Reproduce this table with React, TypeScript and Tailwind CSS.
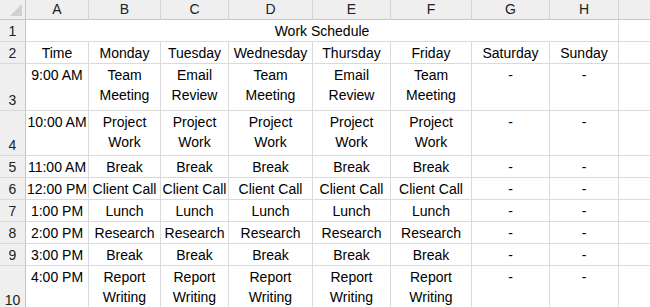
const cols = ["A", "B", "C", "D", "E", "F", "G", "H", ""];

const rows: { n: number; cells: string[]; tall?: boolean }[] = [
  { n: 2, cells: ["Time", "Monday", "Tuesday", "Wednesday", "Thursday", "Friday", "Saturday", "Sunday"] },
  { n: 3, cells: ["9:00 AM", "Team Meeting", "Email Review", "Team Meeting", "Email Review", "Team Meeting", "-", "-"], tall: true },
  { n: 4, cells: ["10:00 AM", "Project Work", "Project Work", "Project Work", "Project Work", "Project Work", "-", "-"], tall: true },
  { n: 5, cells: ["11:00 AM", "Break", "Break", "Break", "Break", "Break", "-", "-"] },
  { n: 6, cells: ["12:00 PM", "Client Call", "Client Call", "Client Call", "Client Call", "Client Call", "-", "-"] },
  { n: 7, cells: ["1:00 PM", "Lunch", "Lunch", "Lunch", "Lunch", "Lunch", "-", "-"] },
  { n: 8, cells: ["2:00 PM", "Research", "Research", "Research", "Research", "Research", "-", "-"] },
  { n: 9, cells: ["3:00 PM", "Break", "Break", "Break", "Break", "Break", "-", "-"] },
  { n: 10, cells: ["4:00 PM", "Report Writing", "Report Writing", "Report Writing", "Report Writing", "Report Writing", "-", "-"], tall: true },
];

function RowHead({ n }: { n: number }) {
  return (
    <div className="flex items-end justify-center bg-[#efefef] border-r border-b border-r-[#c6c6c6] border-b-[#d9d9d9] text-[#222] leading-[20px]">
      {n}
    </div>
  );
}

function Cell({ text, last, wrap }: { text: string; last?: boolean; wrap?: boolean }) {
  return (
    <div
      className={
        "flex justify-center text-center border-b border-[#dadada] leading-[20px] pt-px " +
        (wrap ? "whitespace-pre-line " : "whitespace-nowrap ") +
        (last ? "" : "border-r")
      }
    >
      {text}
    </div>
  );
}

export default function App() {
  return (
    <div
      className="w-[650px] h-[307px] overflow-hidden bg-white text-[14px] text-black"
      style={{ fontFamily: '"Liberation Sans", Arial, sans-serif' }}
    >
      <div className="grid grid-cols-[26px_63px_72px_68px_84px_78px_81px_78px_69px_40px] grid-rows-[20px_22px_22px_47px_45px_22px_22px_22px_22px_22px_45px]">
        {/* corner */}
        <div className="relative bg-[#efefef] border-r border-b border-[#c6c6c6]">
          <svg className="absolute right-[3px] bottom-[3px]" width="12" height="12" viewBox="0 0 12 12">
            <polygon points="12,0 12,12 0,12" fill="#d0d0d0" />
          </svg>
        </div>
        {cols.map((c, i) => (
          <div
            key={i}
            className="flex items-center justify-center bg-[#efefef] border-r border-b border-r-[#d4d4d4] border-b-[#c6c6c6] text-[#222]"
          >
            {c}
          </div>
        ))}

        {/* row 1 */}
        <RowHead n={1} />
        <div className="col-span-8 flex justify-center border-r border-b border-[#dadada] leading-[20px] pt-px">
          Work Schedule
        </div>
        <Cell text="" last />

        {rows.map((r) => (
          <div key={r.n} className="contents">
            <RowHead n={r.n} />
            {r.cells.map((t, i) => {
              const wrap = !!r.tall && i > 0 && i < 6;
              return <Cell key={i} text={wrap ? t.replace(" ", "\n") : t} wrap={wrap} />;
            })}
            <Cell text="" last />
          </div>
        ))}
      </div>
    </div>
  );
}
